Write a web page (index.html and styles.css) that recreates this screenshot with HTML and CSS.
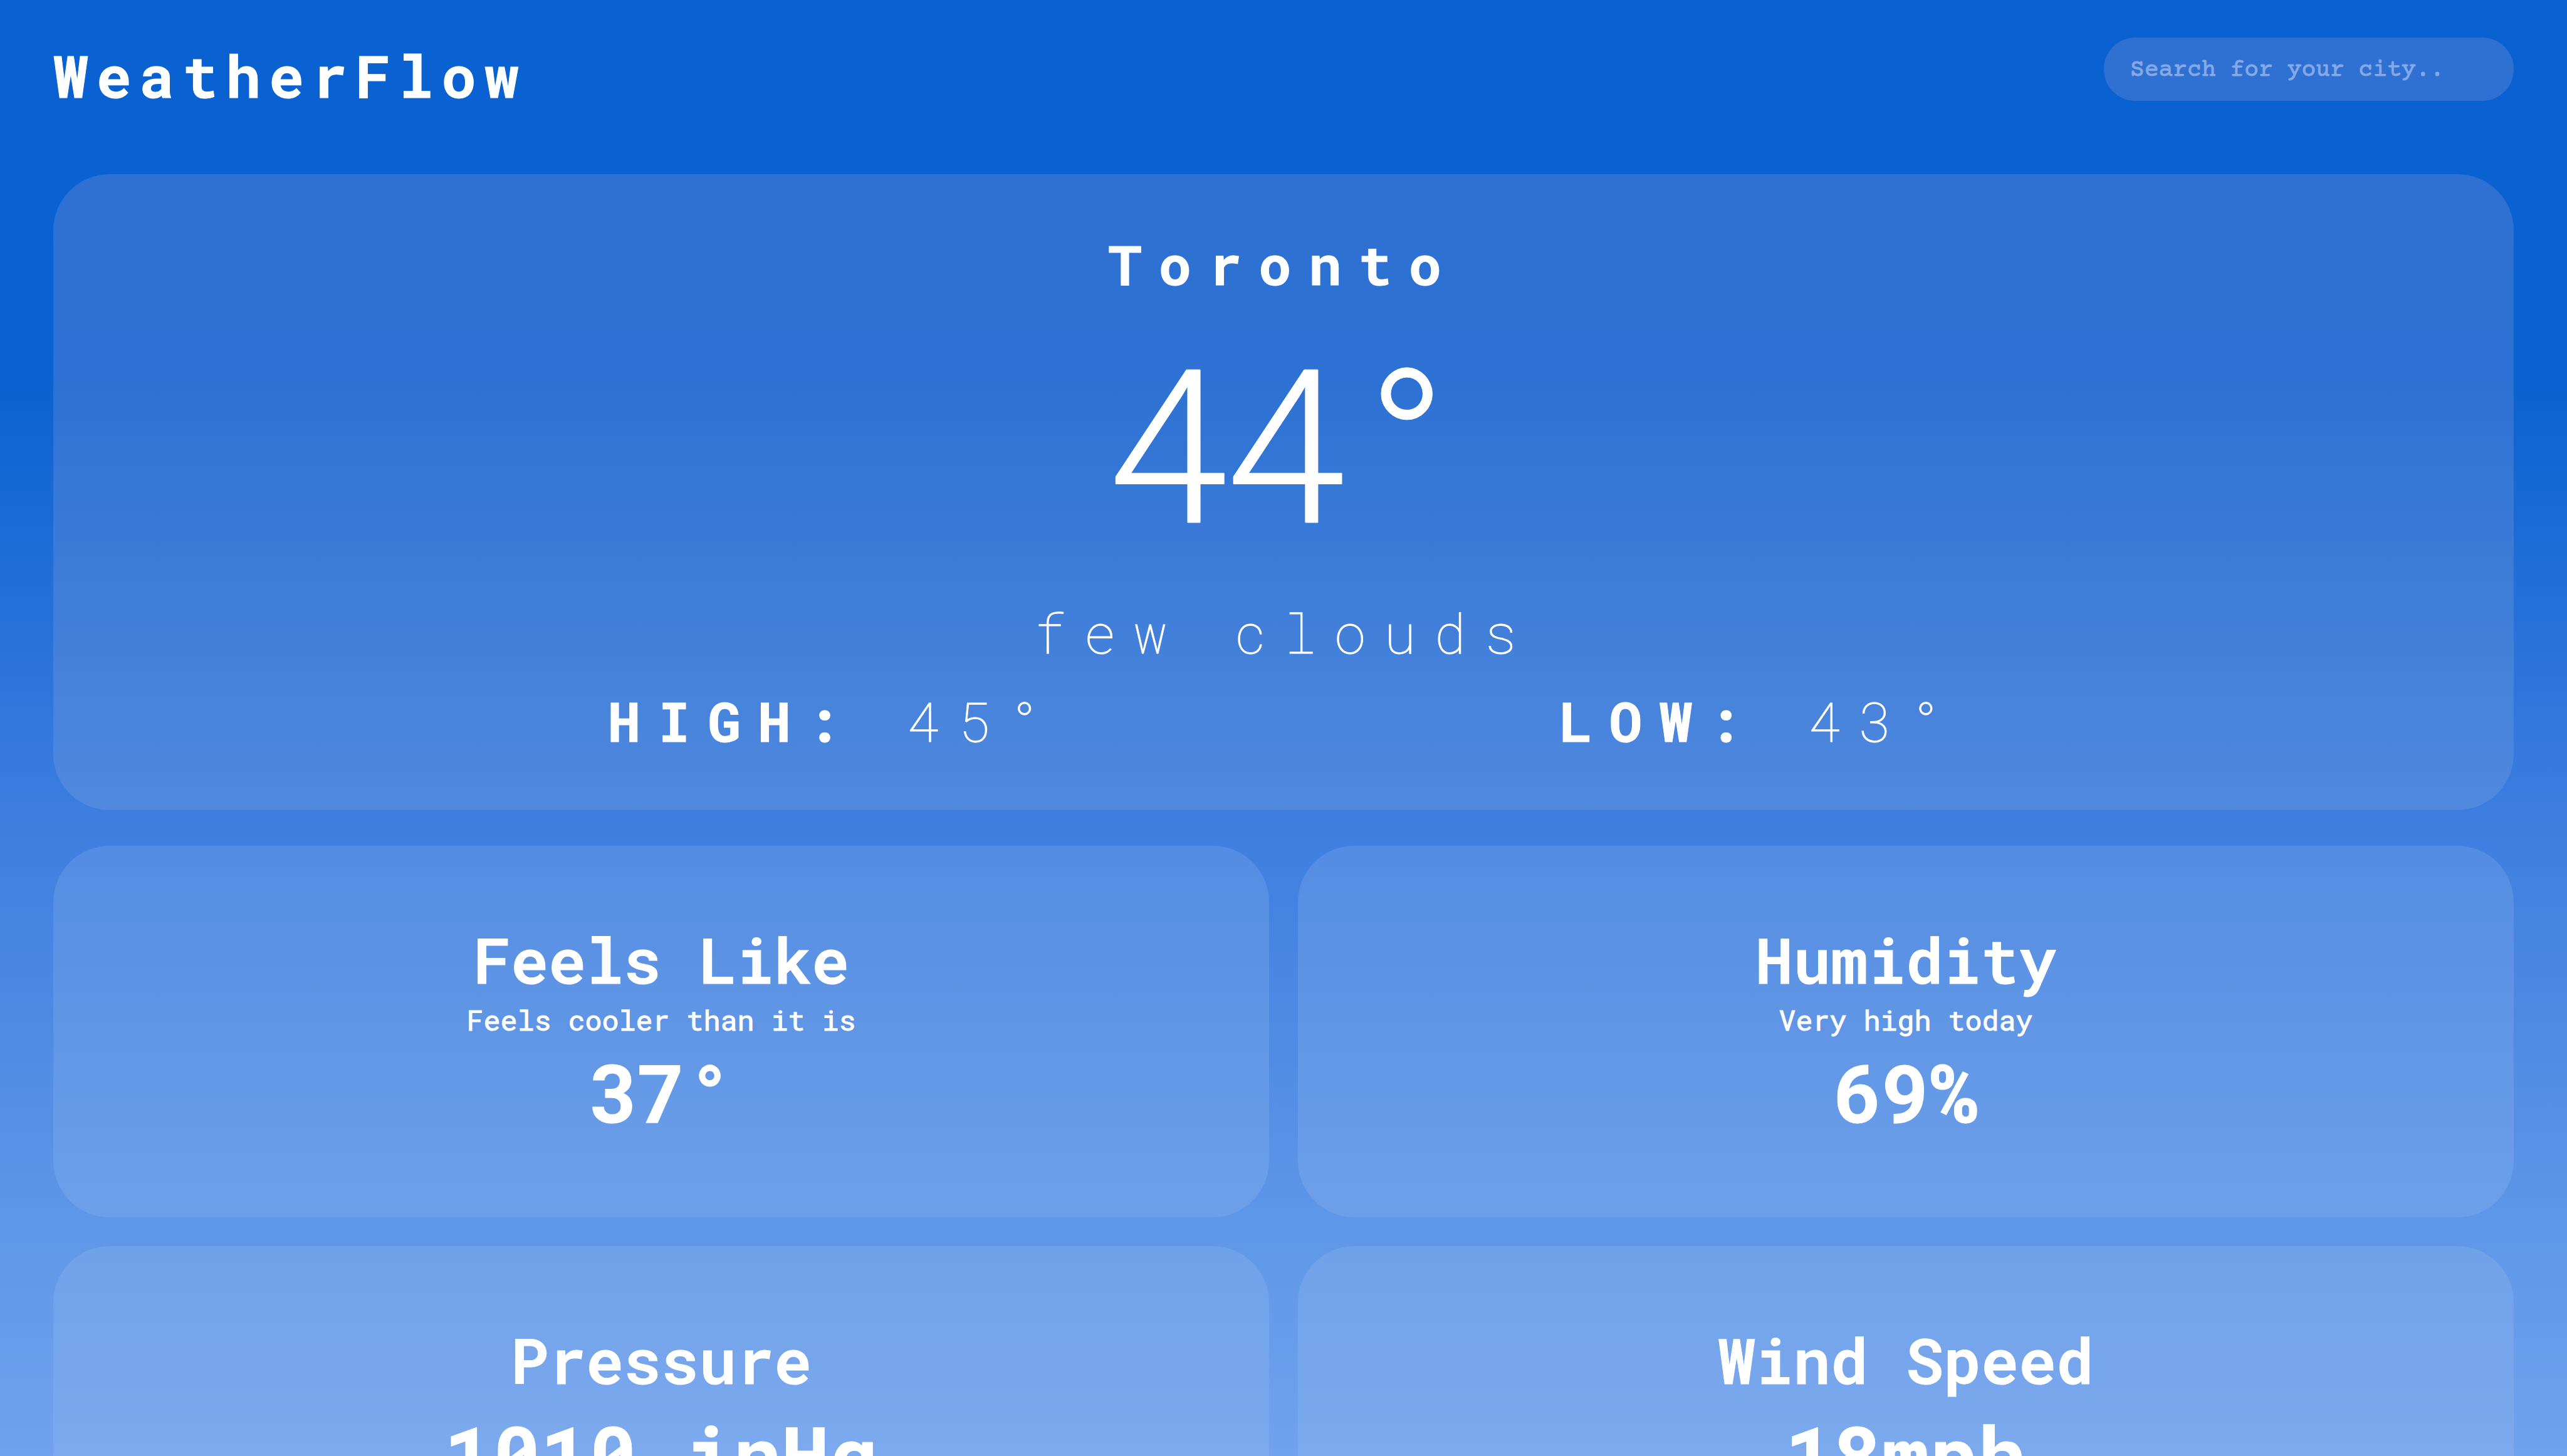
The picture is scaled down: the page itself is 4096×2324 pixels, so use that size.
FILE: index.html
```html
<!DOCTYPE html>
<html lang="en">
<head>
<meta charset="utf-8">
<title>WeatherFlow</title>
<link rel="stylesheet" href="styles.css">
</head>
<body>
<header class="topbar">
  <h1 class="logo">WeatherFlow</h1>
  <form class="search" role="search">
    <input class="search-input" type="text" aria-label="Search for your city" placeholder="Search for your city..">
  </form>
</header>
<main class="content">
  <section class="card current">
    <h2 class="city">Toronto</h2>
    <p class="temperature">44°</p>
    <p class="conditions">few clouds</p>
    <div class="range">
      <p class="range-item"><strong>HIGH:</strong> 45°</p>
      <p class="range-item"><strong>LOW:</strong> 43°</p>
    </div>
  </section>
  <section class="details">
    <article class="card detail">
      <h3 class="detail-title">Feels Like</h3>
      <p class="detail-note">Feels cooler than it is</p>
      <p class="detail-value">37°</p>
    </article>
    <article class="card detail">
      <h3 class="detail-title">Humidity</h3>
      <p class="detail-note">Very high today</p>
      <p class="detail-value">69%</p>
    </article>
    <article class="card detail">
      <h3 class="detail-title">Pressure</h3>
      <p class="detail-value">1010 inHg</p>
    </article>
    <article class="card detail">
      <h3 class="detail-title">Wind Speed</h3>
      <p class="detail-value">18mph</p>
    </article>
  </section>
</main>
</body>
</html>
```
FILE: styles.css
```css
* {
  box-sizing: border-box;
  margin: 0;
}

html {
  min-height: 100%;
  background: linear-gradient(#0a61d1 0, #0a61d1 600px, #3c7ddf 1290px, #5f97e8 1960px, #70a2ed 2324px);
}

body {
  font-family: "Roboto Mono", "DejaVu Sans Mono", monospace;
  color: #fff;
  -webkit-text-stroke: 1px currentColor;
}

.topbar {
  display: flex;
  justify-content: space-between;
  align-items: flex-start;
  padding: 60px 85px 0;
}

.logo {
  font-size: 93px;
  font-weight: 700;
  line-height: 120px;
  letter-spacing: 13px;
}

.search-input {
  display: block;
  width: 654px;
  height: 101px;
  padding: 4px 42px 0;
  border: 0;
  border-radius: 50px;
  background: rgba(241, 196, 224, 0.16);
  color: #fff;
  font-family: "Courier Prime", "Courier New", "Liberation Mono", monospace;
  font-size: 38px;
}

.search-input::placeholder {
  color: #85a9e7;
  opacity: 1;
}

.content {
  display: grid;
  gap: 57px;
  padding: 98px 85px 85px;
}

.card {
  border-radius: 90px;
  text-align: center;
}

.current {
  padding: 85px;
  background: linear-gradient(rgba(241, 196, 224, 0.16), rgba(185, 200, 220, 0.16));
  font-size: 88px;
  line-height: 116px;
  letter-spacing: 27px;
}

.city {
  font-size: 88px;
  font-weight: 700;
}

.temperature {
  padding-bottom: 28px;
  font-size: 343px;
  font-weight: 300;
  line-height: 444px;
  letter-spacing: -18px;
}

.conditions {
  font-weight: 100;
}

.range {
  display: flex;
  justify-content: space-evenly;
  margin-top: 25px;
  font-weight: 100;
}

.range strong {
  font-weight: 700;
}

.details {
  display: grid;
  grid-template-columns: 1fr 1fr;
  gap: 46px;
}

.detail {
  padding: 115px 0;
  background: rgba(190, 214, 240, 0.16);
}

.detail-title {
  font-size: 100px;
  font-weight: 600;
  line-height: 132px;
}

.detail-note {
  font-size: 45px;
  font-weight: 400;
  line-height: 61px;
}

.detail-value {
  font-size: 128px;
  font-weight: 700;
  line-height: 170px;
}
```
